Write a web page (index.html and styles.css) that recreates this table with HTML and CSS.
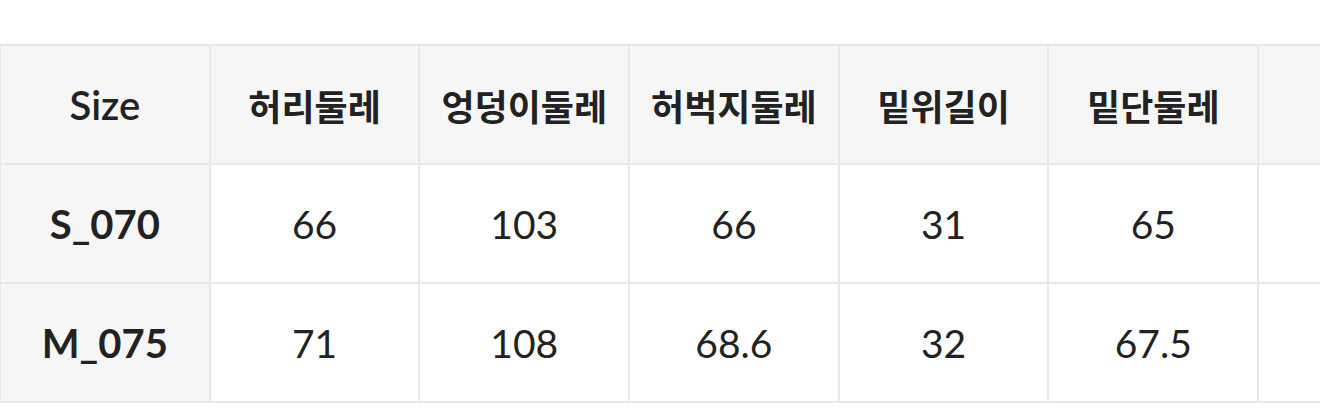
FILE: index.html
```html
<!DOCTYPE html>
<html lang="ko">
<head>
<meta charset="utf-8">
<link rel="stylesheet" href="styles.css">
</head>
<body>
<div class="wrap">
  <table class="size-table">
    <thead>
      <tr>
        <th class="label">Size</th>
        <th>허리둘레</th>
        <th>엉덩이둘레</th>
        <th>허벅지둘레</th>
        <th>밑위길이</th>
        <th>밑단둘레</th>
        <th></th>
      </tr>
    </thead>
    <tbody>
      <tr>
        <th class="rowhead">S_070</th>
        <td>66</td>
        <td>103</td>
        <td>66</td>
        <td>31</td>
        <td>65</td>
        <td></td>
      </tr>
      <tr>
        <th class="rowhead">M_075</th>
        <td>71</td>
        <td>108</td>
        <td>68.6</td>
        <td>32</td>
        <td>67.5</td>
        <td></td>
      </tr>
    </tbody>
  </table>
</div>
</body>
</html>
```

FILE: styles.css
```css
html, body {
  margin: 0;
  padding: 0;
  background: #ffffff;
}
body {
  width: 1320px;
  height: 419px;
  overflow: hidden;
}
.wrap {
  padding-top: 44px;
  width: 1320px;
  overflow: hidden;
}
.size-table {
  border-collapse: collapse;
  table-layout: fixed;
  width: 1468px;
  margin-left: -1px;
  font-family: "Lato", "Noto Sans CJK KR", sans-serif;
  color: #222222;
}
.size-table th,
.size-table td {
  width: 209.7px;
  height: 119px;
  padding: 0;
  border: 2px solid #e8e8e8;
  text-align: center;
  vertical-align: middle;
  box-sizing: border-box;
}
.size-table thead th {
  background: #f6f6f6;
  font-family: "Noto Sans CJK KR", sans-serif;
  font-weight: 700;
  font-size: 36px;
}
.size-table thead th.label {
  font-family: "Lato", sans-serif;
  font-weight: 600;
  font-size: 40px;
}
.size-table tbody th.rowhead {
  background: #f6f6f6;
  font-weight: 700;
  font-size: 40px;
}
.size-table td {
  background: #ffffff;
  font-weight: 400;
  font-size: 39px;
}
```
